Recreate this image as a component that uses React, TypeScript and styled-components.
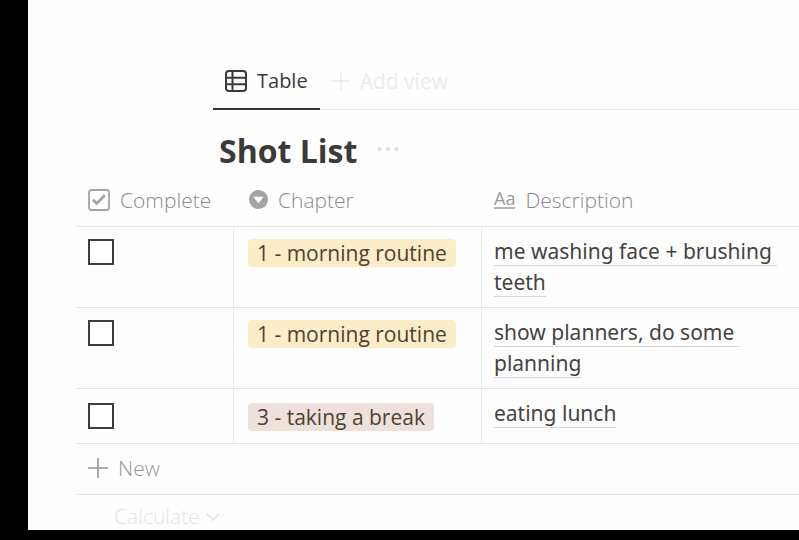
import React from 'react';
import styled, { createGlobalStyle } from 'styled-components';

const GlobalStyle = createGlobalStyle`
  * { box-sizing: border-box; }
  body {
    margin: 0;
    background: #000;
    color: #3b3a37;
    font-family: "Open Sans", "Noto Sans", sans-serif;
    font-size: 21px;
  }
  button {
    font: inherit;
    color: inherit;
    background: none;
    border: 0;
    padding: 0;
    cursor: pointer;
  }
`;

const Frame = styled.div`
  display: flex;
  min-height: 100vh;
  padding: 0 0 10px 28px;
`;

const Page = styled.main`
  flex: 1;
  min-width: 0;
  padding: 56px 0 0 49px;
  background: #fefefe;
`;

const Tabs = styled.nav`
  display: flex;
  height: 54px;
  margin-left: 136px;
  border-bottom: 1px solid #e8e8e8;
`;

const Tab = styled.button<{ $active?: boolean }>`
  display: flex;
  align-items: center;
  gap: 10px;
  height: 54px;
  padding: 0 12px 3px;
  color: ${p => (p.$active ? '#3b3a37' : '#ebebeb')};
  font-size: ${p => (p.$active ? 20 : 21)}px;
  border-bottom: 2px solid ${p => (p.$active ? '#333' : 'transparent')};
`;

const TitleRow = styled.header`
  display: flex;
  align-items: center;
  gap: 20px;
  height: 65px;
  padding: 16px 0 0 142px;
`;

const Title = styled.h1`
  margin: 0;
  font-size: 32px;
  line-height: 48px;
  font-weight: 700;
`;

const MoreButton = styled.button`
  display: flex;
  padding-bottom: 3px;
  color: #e2e2e2;
`;

const Table = styled.table`
  width: 100%;
  table-layout: fixed;
  border-collapse: separate;
  border-spacing: 0;
`;

const Column = styled.col<{ $width?: number }>`
  width: ${p => (p.$width ? `${p.$width}px` : 'auto')};
`;

const HeadCell = styled.th`
  height: 52px;
  padding: 0 12px 2px;
  border-bottom: 1px solid #e6e6e6;
  color: #8a8a88;
  font-weight: 300;
  text-align: left;
  &:first-child { padding-left: 11px; }
`;

const HeadLabel = styled.span`
  display: flex;
  align-items: center;
  gap: 10px;
`;

const Cell = styled.td<{ $top?: number }>`
  padding: ${p => p.$top ?? 9}px 12px 12px;
  border-bottom: 1px solid #e4e4e4;
  border-right: 1px solid #ebebeb;
  vertical-align: top;
  line-height: 31px;
  &:first-child { padding-left: 11px; }
  &:last-child { border-right: 0; }
`;

const Check = styled.input`
  display: block;
  appearance: none;
  width: 26px;
  height: 26px;
  margin: 0;
  border: 2px solid #3c3c3c;
  background: #fff;
  &:checked { background: #3c3c3c; }
`;

const Tag = styled.span<{ $color: string }>`
  display: block;
  width: fit-content;
  margin-left: 2px;
  padding: 0 9px;
  border-radius: 4px;
  background: ${p => p.$color};
  color: #4d4230;
  line-height: 28px;
  white-space: nowrap;
`;

const DescriptionCell = styled(Cell)`
  padding: 9px 12px;
`;

const Description = styled.a`
  color: #444340;
  font-family: "Noto Sans", "Open Sans", sans-serif;
  text-decoration: none;
  white-space: break-spaces;
  border-bottom: 1px solid #d6d6d4;
`;

const NewButton = styled.button`
  display: flex;
  align-items: center;
  gap: 10px;
  width: 100%;
  height: 51px;
  padding: 0 0 2px 11px;
  border-bottom: 1px solid #e4e4e4;
  color: #959595;
  font-weight: 300;
`;

const CalculateButton = styled.button`
  display: flex;
  align-items: center;
  gap: 6px;
  padding: 8px 0 0 37px;
  color: #e4e4e4;
  font-weight: 300;
  line-height: 27px;
`;

const TableIcon = () => (
  <svg width="22" height="22" viewBox="0 0 22 22" fill="none" stroke="currentColor" strokeWidth="2">
    <rect x="1" y="1" width="20" height="20" rx="3" />
    <path d="M1 7.7h20M1 14.3h20M7.5 1v20" />
  </svg>
);

const PlusIcon = ({ size }: { size: number }) => (
  <svg width={size} height={size} viewBox="0 0 20 20" fill="none" stroke="currentColor" strokeWidth="1.6">
    <path d="M10 0v20M0 10h20" />
  </svg>
);

const DotsIcon = () => (
  <svg width="22" height="6" viewBox="0 0 22 6" fill="currentColor">
    <circle cx="2.5" cy="3" r="2.2" />
    <circle cx="11" cy="3" r="2.2" />
    <circle cx="19.5" cy="3" r="2.2" />
  </svg>
);

const CheckboxIcon = () => (
  <svg width="22" height="22" viewBox="0 0 22 22" fill="none" stroke="#a3a3a1">
    <rect x="1" y="1" width="20" height="20" rx="2.5" strokeWidth="1.8" />
    <path d="M5 10.8l3.8 3.6L16.8 6.2" strokeWidth="2.8" />
  </svg>
);

const SelectIcon = () => (
  <svg width="19" height="19" viewBox="0 0 19 19">
    <circle cx="9.5" cy="9.5" r="9.5" fill="#a3a3a1" />
    <path d="M4.8 7h9.4l-4.7 6z" fill="#fff" stroke="#fff" strokeLinejoin="round" strokeWidth="0.6" />
  </svg>
);

const TextIcon = styled.span`
  border-bottom: 2px solid #b5b5b3;
  color: #999997;
  font-size: 18px;
  font-weight: 400;
  line-height: 17px;
`;

const ChevronIcon = () => (
  <svg width="14" height="8" viewBox="0 0 14 8" fill="none" stroke="currentColor" strokeWidth="1.8">
    <path d="M1 1l6 6 6-6" />
  </svg>
);

const SelectLabel = styled(HeadLabel)`
  padding-left: 3px;
`;

const shots = [
  { tag: '1 - morning routine', color: '#fdecc8', text: 'me washing face + brushing teeth', top: 12 },
  { tag: '1 - morning routine', color: '#fdecc8', text: 'show planners, do some planning', top: 12 },
  { tag: '3 - taking a break', color: '#eee0da', text: 'eating lunch', top: 14 },
];

export default function App() {
  return (
    <Frame>
      <GlobalStyle />
      <Page>
        <Tabs>
          <Tab $active><TableIcon />Table</Tab>
          <Tab><PlusIcon size={18} />Add view</Tab>
        </Tabs>
        <TitleRow>
          <Title>Shot List</Title>
          <MoreButton aria-label="More"><DotsIcon /></MoreButton>
        </TitleRow>
        <Table>
          <colgroup>
            <Column $width={157} />
            <Column $width={248} />
            <Column />
          </colgroup>
          <thead>
            <tr>
              <HeadCell><HeadLabel><CheckboxIcon />Complete</HeadLabel></HeadCell>
              <HeadCell><SelectLabel><SelectIcon />Chapter</SelectLabel></HeadCell>
              <HeadCell><HeadLabel><TextIcon aria-hidden="true">Aa</TextIcon>Description</HeadLabel></HeadCell>
            </tr>
          </thead>
          <tbody>
            {shots.map((shot, i) => (
              <tr key={i}>
                <Cell $top={shot.top}><Check type="checkbox" aria-label={`Complete: ${shot.text}`} /></Cell>
                <Cell $top={shot.top}><Tag $color={shot.color}>{shot.tag}</Tag></Cell>
                <DescriptionCell><Description href="#">{shot.text}</Description></DescriptionCell>
              </tr>
            ))}
          </tbody>
        </Table>
        <NewButton><PlusIcon size={20} />New</NewButton>
        <CalculateButton>Calculate<ChevronIcon /></CalculateButton>
      </Page>
    </Frame>
  );
}
